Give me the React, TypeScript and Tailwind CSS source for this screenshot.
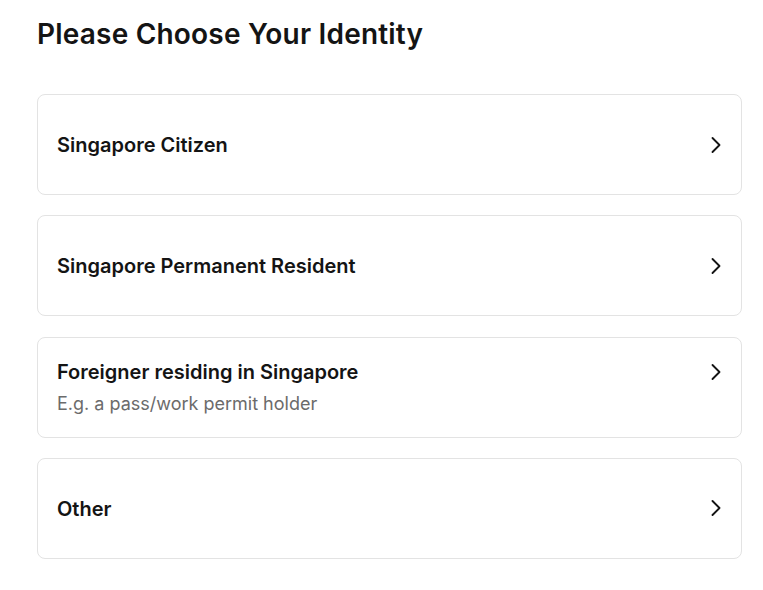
import { ChevronRight } from 'lucide-react'

type Identity = {
  id: string
  label: string
  hint?: string
}

const identities: Identity[] = [
  { id: 'citizen', label: 'Singapore Citizen' },
  { id: 'pr', label: 'Singapore Permanent Resident' },
  { id: 'foreigner', label: 'Foreigner residing in Singapore', hint: 'E.g. a pass/work permit holder' },
  { id: 'other', label: 'Other' },
]

export default function App() {
  return (
    <div className="min-h-screen bg-white px-[37px] pt-[14px] text-[#141414]" style={{ fontFamily: 'Inter, "Noto Sans", sans-serif' }}>
      <h1 className="text-[28px] font-semibold leading-[40px] tracking-[0.2px]">Please Choose Your Identity</h1>

      <div className="mt-[40px] flex w-[705px] flex-col gap-[20.33px]">
        {identities.map((item) => (
          <button
            key={item.id}
            className="flex h-[101px] items-center justify-between rounded-[8px] border border-[#e3e3e3] bg-white pl-[19px] pr-[11px] text-left"
          >
            <div className={item.hint ? 'flex flex-col gap-[8px] -mt-[1px]' : 'mt-[1px]'}>
              <div className="text-[20px] font-semibold leading-[26px]">{item.label}</div>
              {item.hint && <div className="text-[18px] leading-[22px] text-[#6b6b6b]">{item.hint}</div>}
            </div>
            <ChevronRight className={item.hint ? 'h-[28px] w-[28px] -mt-[30px]' : 'h-[28px] w-[28px]'} strokeWidth={1.6} />
          </button>
        ))}
      </div>
    </div>
  )
}
